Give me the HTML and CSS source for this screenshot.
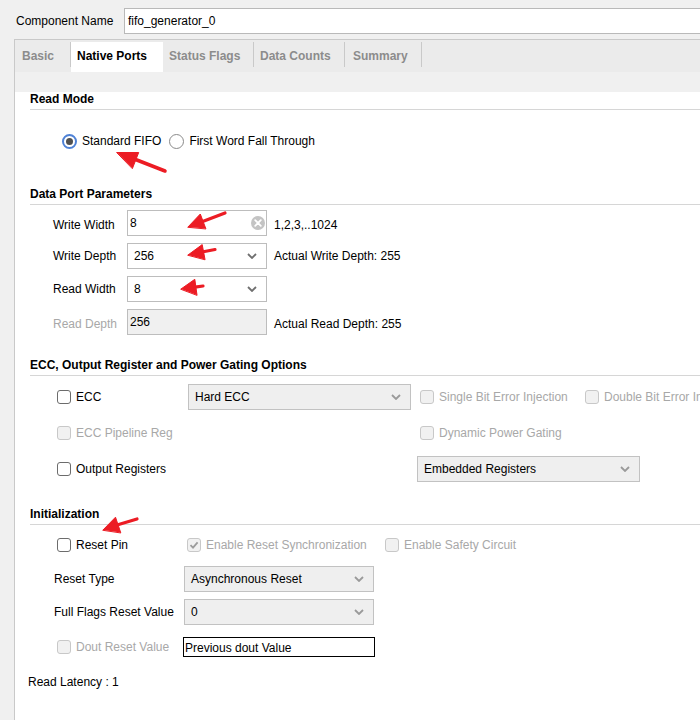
FILE: index.html
```html
<!DOCTYPE html>
<html>
<head>
<meta charset="utf-8">
<title>FIFO Generator</title>
<link rel="stylesheet" href="styles.css">
</head>
<body>
<div class="top">
  <span class="top-label">Component Name</span>
  <div class="top-input">fifo_generator_0</div>
</div>
<div class="main">
  <div class="tabs">
    <div class="tab t-basic">Basic</div>
    <div class="tab active t-native">Native Ports</div>
    <div class="tab t-status">Status Flags</div>
    <div class="tab t-counts">Data Counts</div>
    <div class="tab t-summary">Summary</div>
  </div>
  <div class="panel">
    <div class="heading h-read">Read Mode</div>
    <div class="radio-row">
      <span class="radio-item"><span class="radio on"></span>Standard FIFO</span>
      <span class="radio-item"><span class="radio"></span>First Word Fall Through</span>
    </div>

    <div class="heading h-data">Data Port Parameters</div>
    <div class="params">
      <div class="param-row">
        <span class="plabel low">Write Width</span>
        <div class="field text-field"><span class="val">8</span>
          <svg class="clear" width="14" height="14" viewBox="0 0 14 14"><circle cx="7" cy="7" r="7" fill="#c4c4c4"/><path d="M4.2 4.2 L9.8 9.8 M9.8 4.2 L4.2 9.8" stroke="#fff" stroke-width="1.8" stroke-linecap="round"/></svg>
        </div>
        <span class="hint low">1,2,3,..1024</span>
      </div>
      <div class="param-row">
        <span class="plabel">Write Depth</span>
        <div class="field combo"><span class="val">256</span>
          <svg class="chev" width="10" height="6" viewBox="0 0 10 6"><path d="M1 1 L5 5 L9 1" fill="none" stroke="#6f6f6f" stroke-width="1.8"/></svg>
        </div>
        <span class="hint">Actual Write Depth: 255</span>
      </div>
      <div class="param-row">
        <span class="plabel">Read Width</span>
        <div class="field combo"><span class="val">8</span>
          <svg class="chev" width="10" height="6" viewBox="0 0 10 6"><path d="M1 1 L5 5 L9 1" fill="none" stroke="#6f6f6f" stroke-width="1.8"/></svg>
        </div>
      </div>
      <div class="param-row">
        <span class="plabel disabled low">Read Depth</span>
        <div class="field ro-field"><span class="val">256</span></div>
        <span class="hint low">Actual Read Depth: 255</span>
      </div>
    </div>

    <div class="heading h-ecc">ECC, Output Register and Power Gating Options</div>
    <div class="ecc-row r1">
      <span class="chk-item w-ecc"><span class="chk"></span>ECC</span>
      <div class="dropdown dd-ecc"><span>Hard ECC</span>
        <svg class="chev" width="10" height="6" viewBox="0 0 10 6"><path d="M1 1 L5 5 L9 1" fill="none" stroke="#9a9a9a" stroke-width="1.8"/></svg>
      </div>
      <span class="chk-item disabled w-sbe"><span class="chk off"></span>Single Bit Error Injection</span>
      <span class="chk-item disabled nowrap"><span class="chk off"></span>Double Bit Error Injection</span>
    </div>
    <div class="ecc-row r2">
      <span class="chk-item disabled w-pipe"><span class="chk off"></span>ECC Pipeline Reg</span>
      <span class="chk-item disabled"><span class="chk off"></span>Dynamic Power Gating</span>
    </div>
    <div class="ecc-row r3">
      <span class="chk-item w-out"><span class="chk"></span>Output Registers</span>
      <div class="dropdown dd-emb"><span>Embedded Registers</span>
        <svg class="chev" width="10" height="6" viewBox="0 0 10 6"><path d="M1 1 L5 5 L9 1" fill="none" stroke="#9a9a9a" stroke-width="1.8"/></svg>
      </div>
    </div>

    <div class="heading h-init">Initialization</div>
    <div class="init-row i1">
      <span class="chk-item w-rst"><span class="chk"></span>Reset Pin</span>
      <span class="chk-item disabled w-sync"><span class="chk off checked"><svg width="12" height="12" viewBox="0 0 12 12"><path d="M2.5 6.2 L5 8.6 L9.6 3.4" fill="none" stroke="#9c9c9c" stroke-width="1.8"/></svg></span>Enable Reset Synchronization</span>
      <span class="chk-item disabled"><span class="chk off"></span>Enable Safety Circuit</span>
    </div>
    <div class="init-row i2">
      <span class="ilabel">Reset Type</span>
      <div class="dropdown dd-init"><span>Asynchronous Reset</span>
        <svg class="chev" width="10" height="6" viewBox="0 0 10 6"><path d="M1 1 L5 5 L9 1" fill="none" stroke="#9a9a9a" stroke-width="1.8"/></svg>
      </div>
    </div>
    <div class="init-row i3">
      <span class="ilabel">Full Flags Reset Value</span>
      <div class="dropdown dd-init"><span>0</span>
        <svg class="chev" width="10" height="6" viewBox="0 0 10 6"><path d="M1 1 L5 5 L9 1" fill="none" stroke="#9a9a9a" stroke-width="1.8"/></svg>
      </div>
    </div>
    <div class="init-row i4">
      <span class="chk-item disabled w-dout"><span class="chk off"></span>Dout Reset Value</span>
      <div class="dout-box">Previous dout Value</div>
    </div>
    <div class="latency">Read Latency : 1</div>
  </div>
</div>

<svg class="arrows" width="700" height="720" viewBox="0 0 700 720">
  <g fill="#ec1c24" stroke="#ec1c24" stroke-linecap="round" stroke-linejoin="round">
    <line x1="165" y1="171" x2="133" y2="158.5" stroke-width="3.5"/>
    <polygon points="117,152.5 138.7,152.5 132.5,168.3" stroke-width="1"/>

    <line x1="225" y1="213" x2="202" y2="221.7" stroke-width="3.2"/>
    <polygon points="188,227 200.3,214 205.8,228.6" stroke-width="1"/>

    <line x1="215" y1="249.5" x2="202" y2="252" stroke-width="3.2"/>
    <polygon points="188,255 202.2,244.6 205,259.4" stroke-width="1"/>

    <line x1="203" y1="286" x2="195" y2="287.2" stroke-width="3.2"/>
    <polygon points="181,289 194.8,279.3 197,295" stroke-width="1"/>

    <line x1="137" y1="519" x2="117" y2="525" stroke-width="3.2"/>
    <polygon points="103,530 115.5,517.2 120.7,532.6" stroke-width="1"/>
  </g>
</svg>
</body>
</html>
```

FILE: styles.css
```css
* { box-sizing: border-box; }

html, body {
  margin: 0;
  padding: 0;
  overflow: hidden;
}

body {
  position: relative;
  width: 700px;
  height: 720px;
  background: #f0f0f0;
  font-family: "Liberation Sans", Arial, sans-serif;
  font-size: 12px;
  color: #000;
}

/* top component name row */
.top {
  height: 39px;
  display: flex;
  align-items: flex-start;
  padding-top: 8px;
  padding-left: 16px;
}
.top-label {
  width: 108px;
  line-height: 26px;
  white-space: nowrap;
}
.top-input {
  flex: 1;
  height: 26px;
  margin-right: -20px;
  background: #fff;
  border: 1px solid #b9b9b9;
  padding-left: 3px;
  line-height: 24px;
}

/* main area */
.main {
  margin-left: 14px;
  border-left: 1px solid #c9c9c9;
  border-top: 1px solid #c9c9c9;
}

.tabs {
  height: 32px;
  background: #ebebeb;
  display: flex;
  align-items: flex-start;
  padding-top: 2px;
}
.tab {
  height: 25px;
  padding-top: 7px;
  line-height: 14px;
  font-weight: bold;
  color: #8c8c8c;
  border-right: 1px solid #c9c9c9;
  white-space: nowrap;
}
.tab.active {
  height: 30px;
  background: #fff;
  color: #000;
  border-right: none;
}
.t-basic { width: 56px; padding-left: 7px; }
.t-native { width: 92px; padding-left: 6px; }
.t-status { width: 91px; padding-left: 6px; }
.t-counts { width: 91px; padding-left: 6px; }
.t-summary { width: 77px; padding-left: 8px; }

.panel {
  background: #fff;
  height: 648px;
  padding-left: 15px;
}

.heading {
  font-weight: bold;
  line-height: 14px;
  padding-bottom: 3px;
  border-bottom: 1px solid #d6d6d6;
  white-space: nowrap;
}
.h-read { margin-top: 20px; }
.h-data { margin-top: 36px; }
.h-ecc { margin-top: 23px; }
.h-init { margin-top: 25px; }

/* radios */
.radio-row {
  margin-top: 21px;
  height: 20px;
  display: flex;
  align-items: center;
  padding-left: 32px;
  gap: 8px;
}
.radio-item {
  display: flex;
  align-items: center;
  gap: 5px;
  white-space: nowrap;
}
.radio {
  width: 15px;
  height: 15px;
  border-radius: 50%;
  border: 1px solid #8a8a8a;
  background: #fff;
  display: flex;
  align-items: center;
  justify-content: center;
}
.radio.on {
  border: 2px solid #4f82d6;
}
.radio.on::after {
  content: "";
  width: 7px;
  height: 7px;
  border-radius: 50%;
  background: #505050;
}

/* data port params */
.params {
  margin-top: 5px;
  display: flex;
  flex-direction: column;
  gap: 7px;
}
.param-row {
  height: 26px;
  display: flex;
  align-items: center;
  padding-left: 23px;
}
.plabel {
  width: 74px;
  white-space: nowrap;
}
.low { padding-top: 3px; }
.disabled { color: #a8a8a8; }
.field {
  width: 140px;
  height: 26px;
  border: 1px solid #bdbdbd;
  display: flex;
  align-items: center;
  background: #fff;
}
.text-field { padding-left: 2px; padding-right: 1px; }
.combo { padding-left: 6px; padding-right: 9px; }
.ro-field { padding-left: 2px; background: #f0f0f0; }
.field .val { flex: 1; }
.hint {
  margin-left: 7px;
  white-space: nowrap;
}

/* checkboxes */
.chk-item {
  display: flex;
  align-items: center;
  gap: 5px;
  white-space: nowrap;
  flex: none;
}
.chk {
  width: 14px;
  height: 14px;
  border: 1px solid #6c6c6c;
  border-radius: 3px;
  background: #fff;
  display: flex;
  align-items: center;
  justify-content: center;
  flex: none;
}
.chk.off {
  border-color: #c8c8c8;
  background: #f1f1f1;
}

/* dropdowns */
.dropdown {
  height: 26px;
  border: 1px solid #c2c2c2;
  background: #efefef;
  display: flex;
  align-items: center;
  padding-left: 6px;
  padding-right: 9px;
  flex: none;
  white-space: nowrap;
}
.dropdown span { flex: 1; }

/* ECC rows */
.ecc-row {
  display: flex;
  align-items: center;
  padding-left: 27px;
}
.ecc-row.r1 { margin-top: 8px; height: 26px; }
.ecc-row.r2 { margin-top: 13px; height: 20px; }
.ecc-row.r3 { margin-top: 13px; height: 26px; }
.w-ecc { width: 131px; }
.dd-ecc { width: 223px; margin-right: 9px; }
.w-sbe { width: 165px; }
.w-pipe { width: 363px; }
.w-out { width: 360px; }
.dd-emb { width: 223px; }

/* Initialization rows */
.init-row {
  display: flex;
  align-items: center;
}
.init-row.i1 { margin-top: 10px; height: 20px; padding-left: 27px; }
.init-row.i2 { margin-top: 11px; height: 26px; padding-left: 24px; }
.init-row.i3 { margin-top: 7px; height: 26px; padding-left: 24px; }
.init-row.i4 { margin-top: 12px; height: 20px; padding-left: 27px; }
.w-rst { width: 130px; }
.w-sync { width: 198px; }
.ilabel { width: 130px; white-space: nowrap; }
.dd-init { width: 190px; }
.w-dout { width: 126px; }
.dout-box {
  width: 192px;
  height: 20px;
  border: 1px solid #000;
  padding-left: 1px;
  line-height: 20px;
  white-space: nowrap;
}

.latency {
  margin-top: 18px;
  margin-left: -2px;
  line-height: 14px;
}

/* red annotation arrows overlay */
.arrows {
  position: absolute;
  top: 0;
  left: 0;
  pointer-events: none;
}
```
